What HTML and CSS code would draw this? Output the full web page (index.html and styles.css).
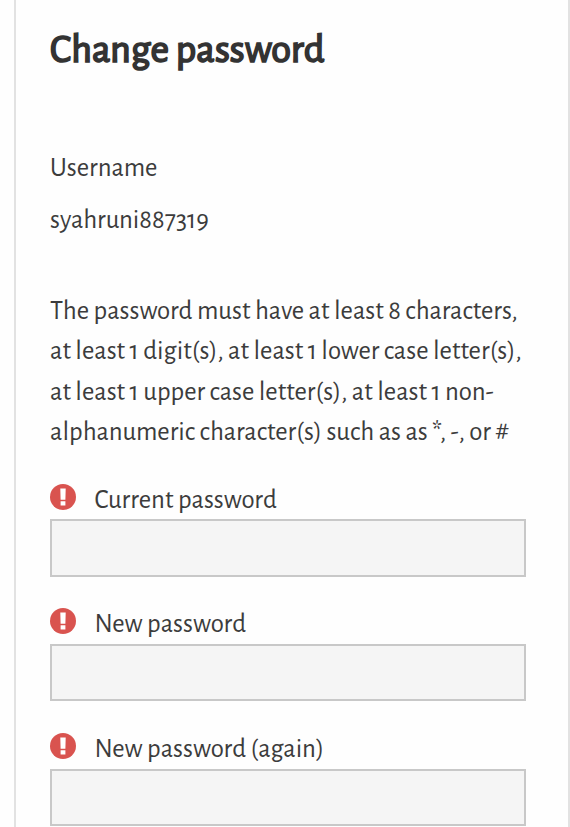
FILE: index.html
```html
<!DOCTYPE html>
<html lang="en">
<head>
<meta charset="utf-8">
<title>Change password</title>
<link rel="stylesheet" href="styles.css">
</head>
<body>
<svg width="0" height="0" class="defs" aria-hidden="true">
  <symbol id="required" viewBox="0 0 26 26">
    <circle cx="13" cy="13" r="13" fill="#d9534f"/>
    <path d="M10.3 4.4h5.4l-.3 11.4h-4.8zM10.6 17.2h4.8v4.2h-4.8z" fill="#fff"/>
  </symbol>
</svg>
<main class="panel">
  <h1 class="title">Change password</h1>
  <p class="label">Username</p>
  <p class="username">syahruni887319</p>
  <p class="policy">
    The password must have at least 8 characters,<br>
    at least 1 digit(s), at least 1 lower case letter(s),<br>
    at least 1 upper case letter(s), at least 1 non-<br>
    alphanumeric character(s) such as as *, -, or #
  </p>
  <form class="form">
    <div class="field">
      <label class="caption" for="current"><svg class="icon"><use href="#required"/></svg><span>Current password</span></label>
      <input class="input" id="current" type="password">
    </div>
    <div class="field">
      <label class="caption" for="new1"><svg class="icon"><use href="#required"/></svg><span>New password</span></label>
      <input class="input" id="new1" type="password">
    </div>
    <div class="field">
      <label class="caption" for="new2"><svg class="icon"><use href="#required"/></svg><span>New password (again)</span></label>
      <input class="input" id="new2" type="password">
    </div>
  </form>
</main>
</body>
</html>
```
FILE: styles.css
```css
* { box-sizing: border-box; }
html { overflow: hidden; background: #fefefe; }
body {
  margin: 0;
  font-family: "Alegreya Sans", Lato, sans-serif;
  font-size: 26.8px;
  line-height: 40.4px;
  color: #3c3c3c;
}
.defs { display: block; height: 0; }
.panel {
  height: 827px;
  margin-left: 14px;
  padding: 20px 42px 0 34px;
  border-left: 2px solid #e2e2e2;
  border-right: 2px solid #e2e2e2;
  overflow: hidden;
}
.title {
  margin: 0;
  height: 128px;
  font-size: 40.3px;
  line-height: 60px;
  font-weight: 400;
  -webkit-text-stroke: 1.7px #333;
  letter-spacing: 0;
  color: #333;
  white-space: nowrap;
}
p { margin: 0; white-space: nowrap; }
.label { height: 52px; }
.username { height: 91px; }
.policy { height: 183.5px; }
.field { height: 124.75px; }
.caption {
  display: flex;
  height: 44.5px;
  white-space: nowrap;
}
.icon { width: 26px; height: 26px; margin: 9.2px 18.5px 0 0; flex: none; }
.caption span { line-height: 50px; }
.input {
  display: block;
  width: 476px;
  height: 57.5px;
  padding: 0 12px;
  border: 2px solid #c8c8c8;
  border-radius: 0;
  background: #f5f5f5;
  font: inherit;
}
```
